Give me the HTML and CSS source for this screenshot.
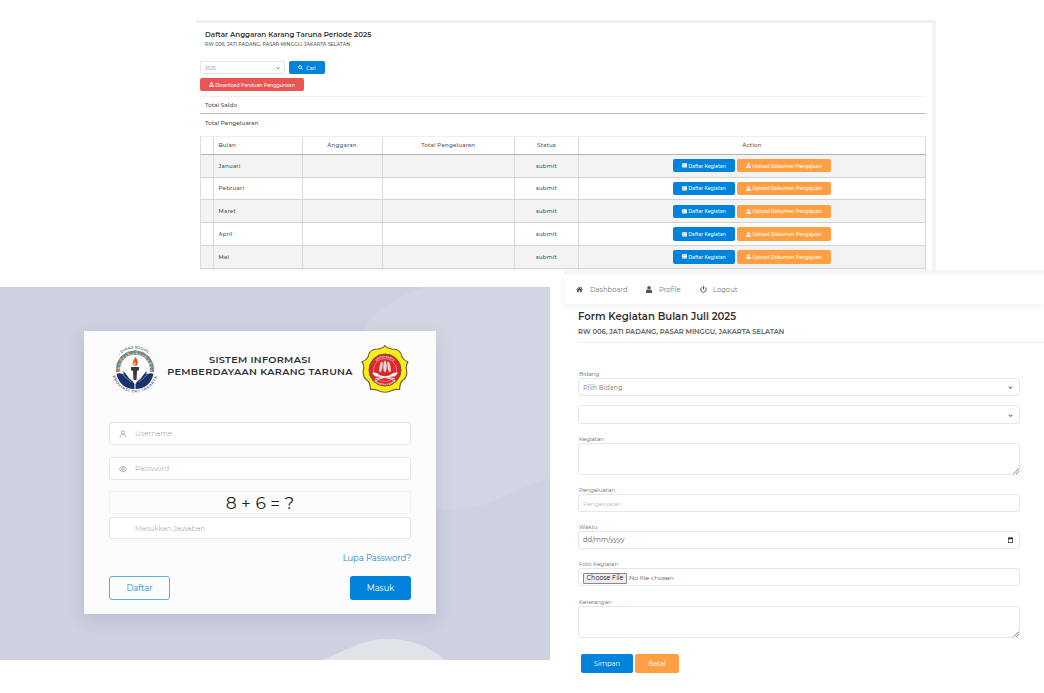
FILE: index.html
```html
<!DOCTYPE html>
<html lang="id">
<head>
<meta charset="utf-8">
<title>Sistem Informasi Pemberdayaan Karang Taruna</title>
<link rel="stylesheet" href="styles.css">
</head>
<body>
<svg class="defs" width="0" height="0">
  <symbol id="list" viewBox="0 0 16 14"><path fill="currentColor" d="M0 0h3.500v4H0zM4 0h12v4H4zM0 4.500h3.500v4H0zM4 4.500h12v4H4zM0 9h3.500v4H0zM4 9h12v4H4z"/></symbol>
  <symbol id="upload" viewBox="0 0 16 16"><path fill="currentColor" d="M8 0l5 5.500h-3V11H6V5.500H3zM0 10h4.500v2h7v-2H16v5H0z"/></symbol>
  <symbol id="download" viewBox="0 0 16 16"><path fill="currentColor" d="M6 0h4v5h3.500L8 11 2.500 5H6zM0 10h4l4 2.500 4-2.500h4v5H0z"/></symbol>
  <symbol id="chevron" viewBox="0 0 8 8"><path fill="none" stroke="currentColor" stroke-width="1.800" d="M1 2.500l3 3 3-3"/></symbol>
  <symbol id="grip" viewBox="0 0 8 8"><path fill="none" stroke="currentColor" stroke-width="1.300" stroke-dasharray="1.800 .4" d="M1 7.500L7.500 1M4.500 7.500l3-3"/></symbol>
</svg>

<section class="budget">
  <h1 class="budget-title">Daftar Anggaran Karang Taruna Periode 2025</h1>
  <p class="budget-sub">RW 006, JATI PADANG, PASAR MINGGU, JAKARTA SELATAN</p>
  <div class="filter">
    <div class="year"><span>2025</span><svg><use href="#chevron"/></svg></div>
    <button class="btn blue search"><svg viewBox="0 0 12 12"><circle cx="5" cy="5" r="3.600" fill="none" stroke="currentColor" stroke-width="2"/><path d="M7.500 7.500L11 11" stroke="currentColor" stroke-width="2.400"/></svg>Cari</button>
  </div>
  <button class="btn red guide"><svg><use href="#download"/></svg>Download Panduan Penggunaan</button>
  <div class="total first">Total Saldo</div>
  <div class="total second">Total Pengeluaran</div>
  <div class="months">
    <div class="row head"><i></i><b>Bulan</b><b>Anggaran</b><b>Total Pengeluaran</b><b>Status</b><b>Action</b></div>
    <div class="row odd"><i></i><b>Januari</b><i></i><i></i><b class="status">submit</b><div class="actions"><button class="btn blue"><svg><use href="#list"/></svg>Daftar Kegiatan</button><button class="btn orange"><svg><use href="#upload"/></svg>Upload Dokumen Pengajuan</button></div></div>
    <div class="row"><i></i><b>Pebruari</b><i></i><i></i><b class="status">submit</b><div class="actions"><button class="btn blue"><svg><use href="#list"/></svg>Daftar Kegiatan</button><button class="btn orange"><svg><use href="#upload"/></svg>Upload Dokumen Pengajuan</button></div></div>
    <div class="row odd"><i></i><b>Maret</b><i></i><i></i><b class="status">submit</b><div class="actions"><button class="btn blue"><svg><use href="#list"/></svg>Daftar Kegiatan</button><button class="btn orange"><svg><use href="#upload"/></svg>Upload Dokumen Pengajuan</button></div></div>
    <div class="row"><i></i><b>April</b><i></i><i></i><b class="status">submit</b><div class="actions"><button class="btn blue"><svg><use href="#list"/></svg>Daftar Kegiatan</button><button class="btn orange"><svg><use href="#upload"/></svg>Upload Dokumen Pengajuan</button></div></div>
    <div class="row odd"><i></i><b>Mei</b><i></i><i></i><b class="status">submit</b><div class="actions"><button class="btn blue"><svg><use href="#list"/></svg>Daftar Kegiatan</button><button class="btn orange"><svg><use href="#upload"/></svg>Upload Dokumen Pengajuan</button></div></div>
    <div class="row"><i></i><i></i><i></i><i></i><i></i><i></i></div>
  </div>
</section>

<div class="lower">
  <section class="login">
    <svg class="waves" viewBox="0 0 550 373">
      <path fill="#d3d6e2" d="M426 0C395 9 373 26 363 44C345 85 365 115 385 145C400 180 405 222 448 223C490 223 502 206 550 191V0z"/>
      <path fill="#dfe4e9" d="M322 373C345 365 360 352 388 352C412 352 430 360 445 373z"/>
    </svg>
    <div class="card">
      <header class="brand">
        <svg class="logo-left" viewBox="0 0 48 50">
          <defs><path id="arc-top" d="M3.500 25A20.500 20.500 0 0 1 44.500 25"/><path id="arc-bottom" d="M.5 25A23.500 23.500 0 0 0 47.500 25"/></defs>
          <circle cx="24" cy="25" r="20.500" fill="#fff"/>
          <text class="ring-text top"><textPath href="#arc-top" startOffset="50%" text-anchor="middle">• DINAS SOSIAL •</textPath></text>
          <text class="ring-text"><textPath href="#arc-bottom" startOffset="50%" text-anchor="middle">PROVINSI DKI JAKARTA</textPath></text>
          <g fill="none" stroke-width="4">
            <path stroke="#4a9ba3" d="M7.200 28A17 17 0 1 1 40.800 28"/>
            <path stroke="#d4635a" stroke-dasharray="2.500 4.500" d="M7.200 28A17 17 0 1 1 40.800 28"/>
            <path stroke="#e1a45c" stroke-dasharray="1.200 8" stroke-dashoffset="-3" d="M7.200 28A17 17 0 1 1 40.800 28"/>
            <path stroke="#b9dbe0" stroke-width="1.200" stroke-dasharray="1.500 2" d="M8.200 28A16 16 0 1 1 39.800 28"/>
          </g>
          <path fill="#16346b" d="M5.500 30c3-1.500 6-.5 9.500 2 3 2.500 7 4.500 8.500 8v5C14 45 7.500 39 5.500 30zM42.500 30c-3-1.500-6-.5-9.500 2-3 2.500-7 4.500-8.500 8v5C34 45 40.500 39 42.500 30z"/>
          <path fill="#16346b" d="M12 27q5 4 8 12l-6-4zM36 27q-5 4-8 12l6-4z"/>
          <path stroke="#fff" stroke-width=".4" fill="none" d="M12 31l8 7M36 31l-8 7"/>
          <path fill="#3a3a42" d="M20 23h8v3l-2 1-.5 9h-3L22 27l-2-1z"/>
          <path fill="#e0532f" d="M24 13c3 3 3.500 5 2 8.500h-3.500C20 19 23 17 24 13z"/>
          <path fill="#f0b34b" d="M23.500 17c2 2 1 3 .8 4.500h-2c-1.300-2 .7-2.500 1.200-4.500z"/>
        </svg>
        <h2 class="brand-name"><span>SISTEM INFORMASI</span><br><span>PEMBERDAYAAN KARANG TARUNA</span></h2>
        <svg class="logo-right" viewBox="0 0 48 50">
          <defs><path id="seal-top" d="M11.500 26A12.500 12.500 0 0 1 36.500 26"/><path id="seal-bottom" d="M9.500 27A14.500 14.500 0 0 0 38.500 27"/></defs>
          <path fill="#faee11" stroke="#66634a" stroke-width="1.200" stroke-linejoin="round" d="M24 1.500Q26 4.500 31 5Q40 5 41 13Q43 16.500 47 18Q44.500 21 45.500 26Q47 33 41 37Q39 39 38.500 45.500Q34 45 31 46.500Q24 50 17 46.500Q14 45 9.500 45.500Q9 39 7 37Q1 33 2.500 26Q3.500 21 1 18Q5 16.500 7 13Q8 5 17 5Q22 4.500 24 1.500z"/>
          <circle cx="24" cy="26" r="16" fill="#e3242b" stroke="#5c5146" stroke-width="1"/>
          <circle cx="24" cy="26" r="11.500" fill="#e3242b" stroke="#f4d9d3" stroke-width=".5"/>
          <text class="seal-text"><textPath href="#seal-top" startOffset="50%" text-anchor="middle">ADITYA KARYA</textPath></text>
          <text class="seal-text"><textPath href="#seal-bottom" startOffset="50%" text-anchor="middle">MAHATVA YODHA</textPath></text>
          <g fill="#f0d5d0" stroke="#7a3932" stroke-width=".4"><ellipse cx="20" cy="23" rx="1.800" ry="5.500" transform="rotate(10 20 23)"/><ellipse cx="28" cy="23" rx="1.800" ry="5.500" transform="rotate(-10 28 23)"/><ellipse cx="24" cy="22.500" rx="2" ry="6"/></g>
          <path fill="#fff" stroke="#6c2b27" stroke-width=".4" d="M11 28q5 0 8 3 5 2 10 0 3-3 8-3-1 5-7 5-6 2-12 0-6 0-7-5z"/>
          <path fill="none" stroke="#f6dfdb" stroke-width="1" d="M14 35q10-4 20 2M34 35q-10-4-20 2"/>
        </svg>
      </header>
      <div class="entry user"><svg viewBox="0 0 12 12"><circle cx="6" cy="3.500" r="2.500"/><path d="M1.500 11.500C1.500 5 10.500 5 10.500 11.500"/></svg><span>Username</span></div>
      <div class="entry pass"><svg viewBox="0 0 12 12"><path d="M.5 6Q6-2.500 11.500 6Q6 14.500 .5 6z"/><circle cx="6" cy="6" r="2"/></svg><span>Password</span></div>
      <div class="captcha">8 + 6 = ?</div>
      <div class="entry answer"><span>Masukkan Jawaban</span></div>
      <a class="forgot">Lupa Password?</a>
      <div class="login-buttons"><button class="big outline">Daftar</button><button class="big solid">Masuk</button></div>
    </div>
  </section>

  <section class="activity">
    <nav class="nav">
      <svg class="n-home" viewBox="0 0 16 14"><path fill="currentColor" d="M8 0l3 2.600V1h2v3.400L16 7l-1 1-7-6-7 6-1-1zM8 3l5.500 4.800V13H9.500V9h-3v4h-4V7.800z"/></svg><span class="n-dash">Dashboard</span>
      <svg class="n-user" viewBox="0 0 12 14"><circle cx="6" cy="3.700" r="3.500" fill="currentColor"/><path fill="currentColor" d="M0 14V11q0-4 3-4.500 3 2 6 0 3 .5 3 4.500v3z"/></svg><span class="n-prof">Profile</span>
      <svg class="n-power" viewBox="0 0 14 14"><path fill="none" stroke="currentColor" stroke-width="2" d="M4 2.500a5.500 5.500 0 1 0 6 0M7 0v7"/></svg><span class="n-out">Logout</span>
    </nav>
    <div class="form">
      <h2 class="form-title">Form Kegiatan Bulan Juli 2025</h2>
      <p class="form-sub">RW 006, JATI PADANG, PASAR MINGGU, JAKARTA SELATAN</p>
      <div class="fields">
        <label>Bidang</label>
        <div class="control"><span class="choice">Pilih Bidang</span><svg class="arrow"><use href="#chevron"/></svg></div>
        <div class="control second-select"><span></span><svg class="arrow"><use href="#chevron"/></svg></div>
        <label class="next">Kegiatan</label>
        <div class="control area"><svg class="grip"><use href="#grip"/></svg></div>
        <label class="next">Pengeluaran</label>
        <div class="control"><span class="hint">Pengeluaran</span></div>
        <label class="next">Waktu</label>
        <div class="control dark"><span>dd/mm/yyyy</span><svg class="calendar" viewBox="0 0 10 12"><path fill="#333" d="M0 1h2V0h1v1h4V0h1v1h2v11H0zM1.300 4.500v6h7.400v-6z" fill-rule="evenodd"/></svg></div>
        <label class="next">Foto Kegiatan</label>
        <div class="control file"><button>Choose File</button><span>No file chosen</span></div>
        <label class="next last">Keterangan</label>
        <div class="control area"><svg class="grip"><use href="#grip"/></svg></div>
      </div>
      <div class="form-buttons"><button class="btn blue save">Simpan</button><button class="btn orange cancel">Batal</button></div>
    </div>
  </section>
</div>
</body>
</html>
```

FILE: styles.css
```css
* { box-sizing: border-box; }
body { margin: 0; width: 1044px; height: 693px; overflow: hidden; background: #fff; font-family: Montserrat, Inter, "Open Sans", sans-serif; color: #444; padding-top: 20px; }
h1, h2, p { margin: 0; }
button { font-family: inherit; border: 0; padding: 0; margin: 0; }
svg { flex: none; display: block; }
.defs { display: none; }

.btn { display: flex; align-items: center; justify-content: center; border-radius: 2px; color: #fff; white-space: nowrap; }
.blue { background: #0183db; }
.orange { background: #ff9f43; }
.red { background: #ea5455; }

.budget { width: 740px; height: 250px; margin-left: 196px; overflow: hidden; border-top: 3px solid #f0f0f0; border-right: 4px solid #f3f3f3; padding: 7px 6px 0 4px; }
.budget-title { padding-left: 5px; font-size: 7.120px; line-height: 10px; font-weight: 600; color: #333; white-space: nowrap; }
.budget-sub { padding-left: 5px; font-size: 4.800px; line-height: 8px; font-weight: 500; color: #555; white-space: nowrap; }
.filter { display: flex; gap: 4px; margin-top: 13px; height: 13px; }
.year { width: 85px; border: 1px solid #e6e6e6; border-radius: 2px; display: flex; align-items: center; justify-content: space-between; padding: 1px 4px 0; font-size: 4.500px; color: #777; }
.year svg { width: 4px; height: 4px; }
.search { width: 36px; height: 13px; gap: 3px; font-size: 4.700px; font-weight: 500; }
.search svg { width: 5px; height: 5px; }
.guide { width: 104px; height: 13px; margin-top: 4px; gap: 1px; font-size: 4.700px; font-weight: 500; }
.guide svg { width: 5px; height: 5px; }
.total { padding-left: 5px; font-size: 5.700px; font-weight: 500; letter-spacing: .06px; color: #444; }
.first { margin-top: 5px; height: 17px; line-height: 16px; border-top: 1px solid #f0f0f0; }
.second { height: 18px; line-height: 17px; border-top: 1px solid #bdbdbd; }
.months { margin-top: 5px; border-left: 1px solid #dcdcdc; border-top: 1px solid #eee; font-size: 5.500px; letter-spacing: .2px; color: #4c4c4c; }
.row { display: grid; grid-template-columns: 12.500px 89px 80px 132.500px 64px 1fr; height: 22.800px; border-bottom: 1px solid #d3d3d3; }
.row > * { display: flex; align-items: center; justify-content: center; font-weight: 500; border-right: 1px solid #dadada; }
.row > :nth-child(2) { justify-content: flex-start; padding-left: 5px; }
.odd { background: #f3f3f3; }
.head { height: 17.800px; border-bottom-color: #b3b3b3; }
.row > .actions { gap: 2px; }
.actions .btn { height: 13.500px; font-size: 4.700px; gap: 1px; letter-spacing: 0; font-weight: 500; }
.actions .blue { width: 62px; }
.actions .orange { width: 94px; }
.actions svg { width: 5px; height: 5px; }

.lower { display: flex; gap: 14px; height: 423px; }
.login { width: 550px; height: 373px; margin-top: 17px; background: #cfd1e1; display: grid; }
.waves { grid-area: 1 / 1; width: 550px; height: 373px; }
.card { grid-area: 1 / 1; width: 352px; height: 283px; margin: 44px 0 0 84px; background: #fcfcfc; box-shadow: 0 5px 16px rgba(60, 60, 110, .15); padding: 13px 25px 0 25px; display: flex; flex-direction: column; z-index: 1; }
.brand { display: flex; height: 50px; margin-bottom: 28px; }
.logo-left { width: 48px; height: 50px; margin-left: 2px; overflow: visible; }
.logo-right { width: 48px; height: 50px; margin-left: 6px; }
.ring-text { font-size: 3.600px; font-weight: 600; fill: #4c5570; letter-spacing: .75px; }
.top { letter-spacing: .2px; }
.seal-text { font-size: 2.500px; font-weight: 700; fill: #fbe8e6; }
.brand-name { width: 190px; margin-left: 6px; padding-top: 10px; text-align: center; font-size: 9.700px; line-height: 11.500px; font-weight: 600; color: #2d2d35; white-space: nowrap; letter-spacing: .28px; }
.entry { flex: none; height: 23px; border: 1px solid #e6e6ea; border-radius: 3px; background: #fff; display: flex; align-items: center; font-size: 7.200px; color: #8f8f8f; font-weight: 300; }
.entry svg { width: 8px; height: 8px; margin-left: 9px; margin-right: 8px; fill: none; stroke: #999; stroke-width: 1.100; }
.pass { margin-top: 12px; }
.captcha { flex: none; height: 23px; margin-top: 11px; padding-bottom: 1px; border: 1px solid #f3f3f5; display: flex; align-items: center; justify-content: center; font-size: 17.100px; font-weight: 450; color: #222; }
.answer { margin-top: 3px; height: 22px; padding-left: 25px; }
.forgot { height: 14px; margin-top: 12px; line-height: 14px; align-self: flex-end; font-size: 8.400px; font-weight: 450; color: #2187d2; }
.login-buttons { display: flex; justify-content: space-between; margin-top: 11px; }
.big { width: 61px; height: 24px; border-radius: 3px; font-size: 8.400px; font-weight: 450; }
.outline { background: #fcfcfc; border: 1px solid #5ab0ea; color: #2187d2; }
.solid { background: #0183db; color: #fff; }

.activity { width: 480px; height: 423px; background: #fff; border-top: 4px solid #f5f5f5; }
.nav { height: 30px; display: flex; align-items: center; padding-left: 12px; font-size: 6.800px; color: #777; box-shadow: 0 4px 8px rgba(0, 0, 0, .05); }
.nav svg { color: #555; }
.nav span { white-space: nowrap; }
.n-home { width: 7px; height: 7px; }
.n-dash { width: 37px; margin-left: 7px; }
.n-user { width: 6px; height: 7px; margin-left: 19px; }
.n-prof { width: 22px; margin-left: 7px; }
.n-power { width: 7px; height: 7px; margin-left: 19px; }
.n-out { margin-left: 6px; }
.form { padding-left: 14px; }
.form-title { padding-top: 6px; font-size: 10.080px; line-height: 14px; font-weight: 600; color: #333; white-space: nowrap; }
.form-sub { height: 19px; padding-top: 3px; font-size: 6.720px; line-height: 10px; font-weight: 600; color: #5c5c5c; border-bottom: 1px solid #ececec; white-space: nowrap; }
.fields { width: 442px; margin-top: 26px; }
label { display: block; height: 9px; line-height: 10px; padding-left: 1px; font-size: 5.600px; color: #666; }
.next { margin-top: 10px; }
.last { margin-top: 11px; }
.control { height: 18px; border: 1px solid #e6e6e6; border-radius: 3px; display: flex; align-items: center; justify-content: space-between; padding: 1px 6px 0 4px; font-size: 6.700px; color: #777; }
.second-select { margin-top: 9px; height: 19px; }
.area { height: 32px; align-items: flex-end; justify-content: flex-end; padding: 0; }
.arrow { width: 5px; height: 5px; color: #888; }
.grip { width: 6px; height: 6px; color: #444; }
.calendar { width: 5px; height: 6px; }
.choice { font-size: 6.450px; }
.hint { color: #b5b5b5; font-size: 6px; }
.dark { color: #555; padding-top: 0; }
.file { justify-content: flex-start; gap: 2px; color: #555; font-size: 6.350px; padding-top: 2px; }
.file button { width: 44px; height: 11px; border: 1px solid #888; border-radius: 1px; background: #ededed; font-size: 6.400px; color: #222; white-space: nowrap; }
.form-buttons { display: flex; gap: 2px; margin: 16px 0 0 3px; }
.form-buttons .btn { height: 18.500px; font-size: 6.800px; }
.save { width: 52px; }
.cancel { width: 44px; }
```
